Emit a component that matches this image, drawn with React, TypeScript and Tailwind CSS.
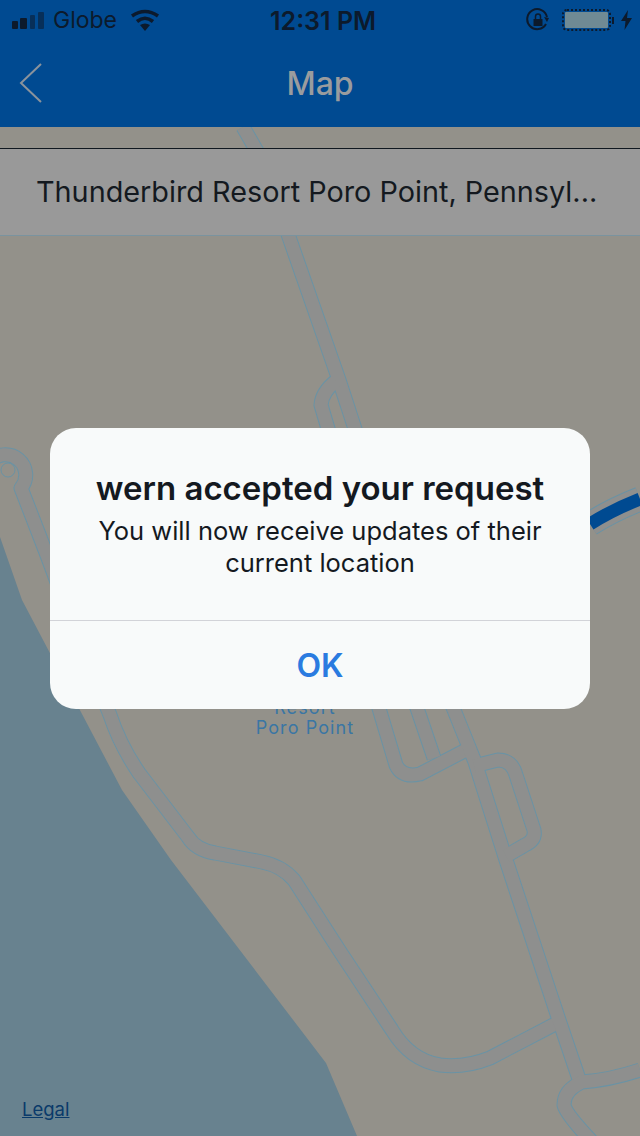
const ROADS = [
  'M243 127 L262 160 L289 237 L339 380 L356 432',
  'M336 381 Q322 392 321 405 L329 432',
  'M-10 462 A18 18 0 1 1 21 488 L45 550 L60 590',
  'M100 690 L110 715 Q120 745 139 773 L188 837 Q196 850 215 853 L262 862 Q282 866 294 880 L339 950 L392 1030 Q410 1060 440 1065 Q465 1068 490 1058 L559 1022',
  'M378 705 L396 765 Q402 778 420 774 L470 748',
  'M416 705 L434 758',
  'M452 705 L475 762 L506 860 L559 1020 L580 1082',
  'M474 766 L498 760 Q512 760 516 775 L534 830 Q536 840 525 845 L506 856',
  'M640 1070 Q610 1080 582 1082 Q564 1090 564 1105 Q566 1115 600 1150',
];

function MapLayer() {
  return (
    <svg className="absolute inset-0" width="640" height="1136" viewBox="0 0 640 1136">
      <rect width="640" height="1136" fill="#93918a" />
      <path d="M0 537 L22 600 L122 790 L171 860 L326 1063 L357 1136 L0 1136 Z" fill="#68828f" />
      {ROADS.map((d) => (
        <path key={d} d={d} fill="none" stroke="#6a93a5" strokeWidth="15" strokeLinejoin="round" />
      ))}
      {ROADS.map((d) => (
        <path key={d} d={d} fill="none" stroke="#8e8f8e" strokeWidth="13" strokeLinejoin="round" />
      ))}
      <path d="M640 499 Q612 510 590 524" fill="none" stroke="#6a93a5" strokeWidth="25" />
      <path d="M640 499 Q612 510 590 524" fill="none" stroke="#8e8f8e" strokeWidth="23" />
      <path d="M640 499 Q612 510 590 524" fill="none" stroke="#004a91" strokeWidth="13" />
      <circle cx="8" cy="470" r="7" fill="#93918a" stroke="#6a93a5" strokeWidth="1" />
      <text x="305" y="734" textAnchor="middle" fill="#3a76a4" fontSize="18" letterSpacing="1.1" fontFamily="Inter, sans-serif">Poro Point</text>
      <text x="305" y="714" textAnchor="middle" fill="#3a76a4" fontSize="18" letterSpacing="1.1" fontFamily="Inter, sans-serif">Resort</text>
    </svg>
  );
}

function StatusBar() {
  return (
    <div className="relative flex h-[40px] items-center pl-[12px] pr-[8px] text-[#0c1a2c]">
      <svg width="32" height="20" viewBox="0 0 32 20" fill="#0c1a2c">
        <rect x="0" y="11" width="6" height="8" rx="1" />
        <rect x="8" y="8" width="7" height="11" rx="1" />
        <rect x="18" y="5" width="5" height="14" rx="1" opacity="0.55" />
        <rect x="26" y="2" width="6" height="17" rx="1" opacity="0.55" />
      </svg>
      <span className="ml-[9px] text-[23px] leading-none">Globe</span>
      <svg className="ml-[13px]" width="30" height="22" viewBox="0 0 30 22" fill="none" stroke="#0c1a2c" strokeWidth="3.6">
        <path d="M2 7 Q15 -2 28 7" />
        <path d="M7 12.5 Q15 6 23 12.5" />
        <path d="M10 16 L15 22 L20 16 Q15 13 10 16 Z" fill="#0c1a2c" stroke="none" />
      </svg>
      <span className="absolute left-[270px] top-[7px] text-[25px] font-semibold leading-[28px]">12:31 PM</span>
      <div className="ml-auto flex items-center">
        <svg width="24" height="24" viewBox="0 0 24 24" fill="none" stroke="#0c1a2c" strokeWidth="2">
          <path d="M20 16 A10 10 0 1 1 21 9" />
          <path d="M18 9 L23 10 L21 14" fill="#0c1a2c" stroke="none" />
          <rect x="7.5" y="11" width="9" height="7" fill="#0c1a2c" stroke="none" />
          <path d="M9.5 11 V8.5 A2.5 2.5 0 0 1 14.5 8.5 V11" strokeWidth="1.5" />
        </svg>
        <div className="ml-[12px] flex h-[22px] w-[49px] rounded-[5px] border-2 border-dotted border-[#0c1a2c] p-[1px]">
          <div className="flex-1 rounded-[1px] bg-[#6f8a94]" />
        </div>
        <div className="ml-[1px] h-[7px] w-[2px] bg-[#0c1a2c]" />
        <svg className="ml-[7px]" width="11" height="20" viewBox="0 0 11 20" fill="#0c1a2c">
          <path d="M7 0 L0 11 H4.5 L3.5 20 L11 8 H6 Z" />
        </svg>
      </div>
    </div>
  );
}

export default function App() {
  return (
    <div className="relative h-[1136px] w-[640px] overflow-hidden font-['Inter',sans-serif]">
      <MapLayer />

      <div className="relative bg-[#004a91]">
        <StatusBar />
        <div className="relative flex h-[87px] items-center justify-center">
          <svg className="absolute left-[18px] top-[23px]" width="26" height="40" viewBox="0 0 26 40" fill="none" stroke="#8a939c" strokeWidth="2">
            <path d="M23 1 L3 20 L23 39" />
          </svg>
          <span className="text-[32px] font-medium text-[#9a9c9e]">Map</span>
        </div>
      </div>

      <div className="relative mt-[21px] flex h-[88px] items-center border-b border-t border-b-[#7a939f] border-t-[#10181f] bg-[#999999] pl-[36px] text-[28.8px] text-[#14191f]">
        Thunderbird Resort Poro Point, Pennsyl...
      </div>

      <div className="absolute left-[50px] top-[428px] flex h-[281px] w-[540px] flex-col rounded-[26px] bg-[#f8fafa]">
        <div className="flex h-[193px] flex-col items-center border-b border-[#d2d3d8] pt-[40px] text-center">
          <h1 className="text-[33px] font-semibold leading-[40px] text-[#14191f]">wern accepted your request</h1>
          <p className="mt-[7px] w-[460px] text-[25.5px] leading-[32px] text-[#14191f]">
            You will now receive updates of their current location
          </p>
        </div>
        <div className="flex flex-1 items-center justify-center pt-[1px] text-[32px] font-semibold text-[#2a7be0]">OK</div>
      </div>

      <span className="absolute left-[22px] top-[1099px] text-[18.5px] leading-[20px] text-[#0a3a6a] underline">Legal</span>
    </div>
  );
}
